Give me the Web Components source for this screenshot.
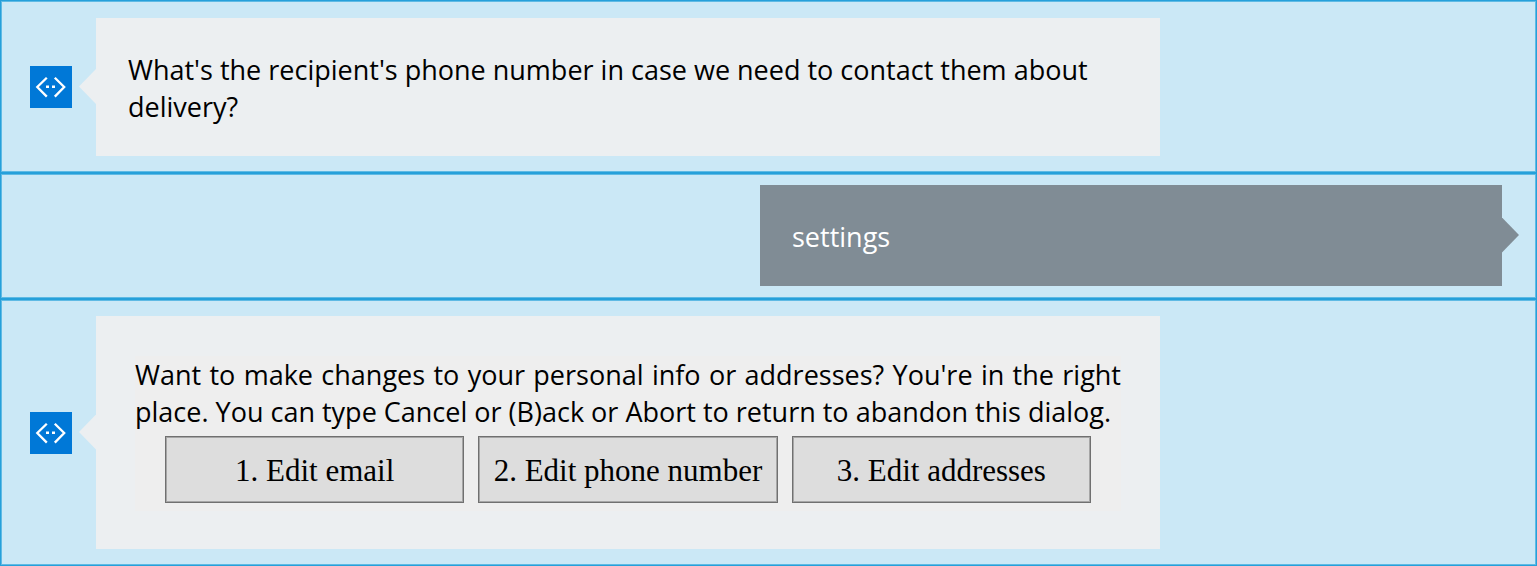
<!DOCTYPE html>
<html lang="en">
<head>
<meta charset="utf-8">
<meta name="viewport" content="width=device-width, initial-scale=1">
<title>Chat</title>
<style>
  body {
    margin: 0;
    background: #cbe8f6;
    font: 27px/37px "Segoe UI", "Open Sans", "Noto Sans", sans-serif;
    color: #000;
  }
</style>
</head>
<body>
<chat-log>
  <chat-message>What's the recipient's phone number in case we need to contact them about delivery?</chat-message>
  <chat-message from="user">settings</chat-message>
  <chat-message card>
    <choice-card>
      Want to make changes to your personal info or addresses? You're in the right place. You can type Cancel or (B)ack or Abort to return to abandon this dialog.
      <choice-button slot="actions">1. Edit email</choice-button>
      <choice-button slot="actions">2. Edit phone number</choice-button>
      <choice-button slot="actions">3. Edit addresses</choice-button>
    </choice-card>
  </chat-message>
</chat-log>

<template id="chat-log">
  <style>
    :host { display: flex; flex-direction: column; }
  </style>
  <slot></slot>
</template>

<template id="bot-avatar">
  <style>
    :host { display: block; flex: none; width: 42px; height: 42px; background: #0078d7; }
    svg { display: block; }
  </style>
  <svg width="42" height="42" viewBox="0 0 42 42" role="img" aria-label="Bot">
    <g fill="none" stroke="#fff" stroke-width="2.3">
      <path d="M16.8 11.7 7.3 21l9.5 9.6"/>
      <path d="M24.8 11.7 34.2 21l-9.4 9.6"/>
    </g>
    <path fill="#fff" d="M16 19.5h3v2.6h-3zM22 19.5h3v2.6h-3z"/>
  </svg>
</template>

<template id="chat-message">
  <style>
    :host {
      --bubble: #eceff1;
      display: flex;
      align-items: center;
      gap: 24px;
      padding: 15px 36px 15px 28px;
      border: 2px solid #26a0da;
      outline: 1px solid #5fbae4;
      outline-offset: -2px;
    }
    :host(:first-child) { padding-top: 16px; }
    .bubble {
      position: relative;
      box-sizing: border-box;
      flex: 0 1 1064px;
      padding: 33px 32px 31px;
      background: var(--bubble);
    }
    .bubble::before {
      content: "";
      position: absolute;
      top: calc(50% - 18px);
      right: 100%;
      width: 17px;
      height: 35px;
      background: var(--bubble);
      clip-path: polygon(100% 0, 0 50%, 100% 100%);
    }
    :host([card]) .bubble { padding: 40px 39px 38px; }
    :host([from="user"]) {
      --bubble: #808c95;
      justify-content: flex-end;
      padding: 10px 33px 11px;
      color: #fff;
    }
    :host([from="user"]) bot-avatar { display: none; }
    :host([from="user"]) .bubble { flex-basis: 742px; }
    :host([from="user"]) .bubble::before {
      right: auto;
      left: 100%;
      clip-path: polygon(0 0, 100% 50%, 0 100%);
    }
  </style>
  <bot-avatar></bot-avatar>
  <div class="bubble"><slot></slot></div>
</template>

<template id="choice-card">
  <style>
    :host { display: block; padding-bottom: 8px; background: #eee; }
    .text { margin: 0; text-align: justify; }
    .actions {
      display: grid;
      grid-template-columns: repeat(3, 1fr);
      gap: 14px;
      margin: 6px 30px 0;
    }
  </style>
  <p class="text"><slot></slot></p>
  <div class="actions"><slot name="actions"></slot></div>
</template>

<template id="choice-button">
  <style>
    :host { display: block; }
    button {
      display: block;
      box-sizing: border-box;
      width: 100%;
      min-height: 67px;
      margin: 0;
      padding: 2px 4px 0;
      border: 1px solid #707070;
      border-radius: 0;
      box-shadow: inset 0 0 0 1px #a6a6a6;
      background: #ddd;
      color: #000;
      font: 31px/37px Georgia, "Liberation Serif", serif;
      cursor: pointer;
    }
  </style>
  <button type="button"><slot></slot></button>
</template>

<script>
  const define = (name) => customElements.define(name, class extends HTMLElement {
    constructor() {
      super();
      this.attachShadow({ mode: "open" })
        .append(document.getElementById(name).content.cloneNode(true));
    }
  });
  ["chat-log", "bot-avatar", "chat-message", "choice-card", "choice-button"].forEach(define);
</script>
</body>
</html>
